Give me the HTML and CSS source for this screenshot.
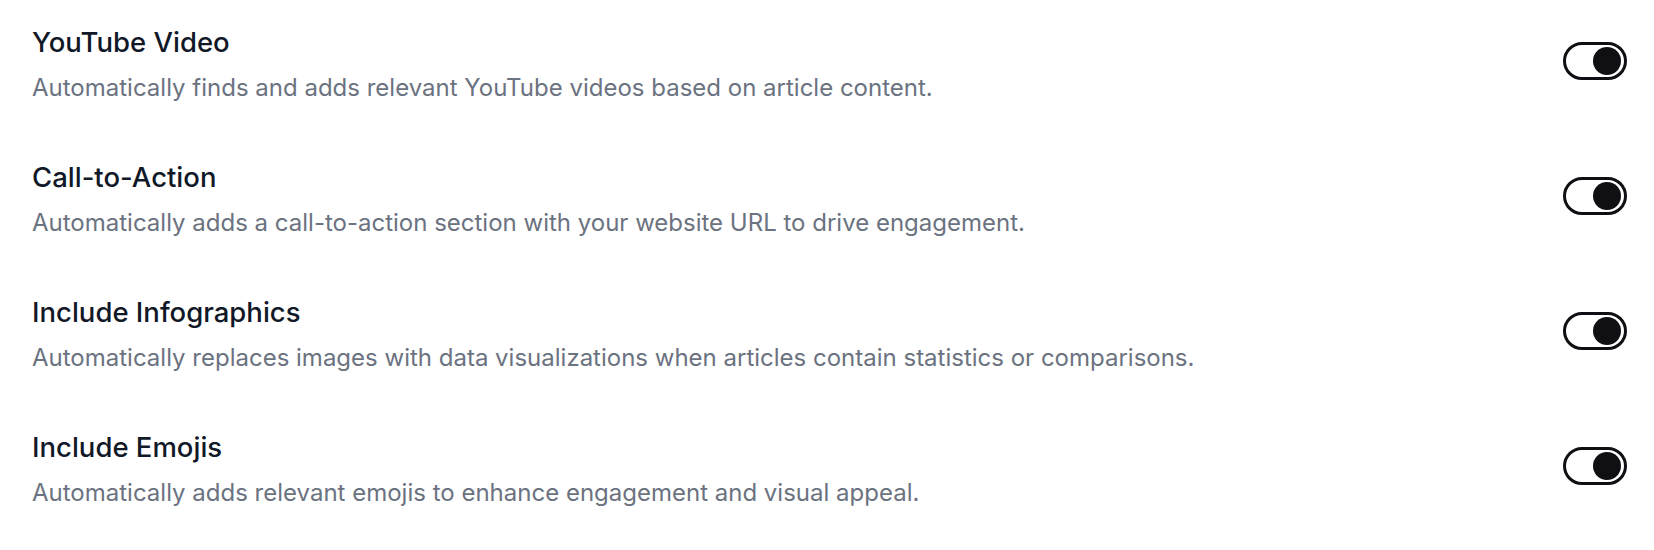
FILE: index.html
```html
<!DOCTYPE html>
<html>
<head>
<meta charset="utf-8">
<link rel="stylesheet" href="styles.css">
</head>
<body>
<div class="list">
  <div class="row">
    <div class="text">
      <div class="title">YouTube Video</div>
      <div class="desc">Automatically finds and adds relevant YouTube videos based on article content.</div>
    </div>
    <div class="toggle"><span class="knob"></span></div>
  </div>
  <div class="row">
    <div class="text">
      <div class="title">Call-to-Action</div>
      <div class="desc">Automatically adds a call-to-action section with your website URL to drive engagement.</div>
    </div>
    <div class="toggle"><span class="knob"></span></div>
  </div>
  <div class="row">
    <div class="text">
      <div class="title">Include Infographics</div>
      <div class="desc">Automatically replaces images with data visualizations when articles contain statistics or comparisons.</div>
    </div>
    <div class="toggle"><span class="knob"></span></div>
  </div>
  <div class="row">
    <div class="text">
      <div class="title">Include Emojis</div>
      <div class="desc">Automatically adds relevant emojis to enhance engagement and visual appeal.</div>
    </div>
    <div class="toggle"><span class="knob"></span></div>
  </div>
</div>
</body>
</html>
```
FILE: styles.css
```css
html, body {
  margin: 0;
  padding: 0;
  background: #ffffff;
}
body {
  font-family: Inter, "Liberation Sans", sans-serif;
}
.list {
  display: flex;
  flex-direction: column;
  gap: 56px;
  padding: 24px 27px 40px 32px;
}
.row {
  display: flex;
  align-items: flex-start;
  justify-content: space-between;
}
.text {
  display: flex;
  flex-direction: column;
  gap: 13px;
}
.title {
  font-size: 27.5px;
  line-height: 36px;
  font-weight: 500;
  color: #111827;
}
.desc {
  font-size: 24px;
  line-height: 30px;
  color: #6b7280;
}
.toggle {
  box-sizing: border-box;
  width: 64px;
  height: 38px;
  margin-top: 18px;
  border: 3px solid #0f0f14;
  border-radius: 19px;
  background: #fff;
  display: flex;
  align-items: center;
  justify-content: flex-end;
  padding-right: 3px;
}
.knob {
  width: 28px;
  height: 28px;
  border-radius: 50%;
  background: #0f0f14;
}
```
